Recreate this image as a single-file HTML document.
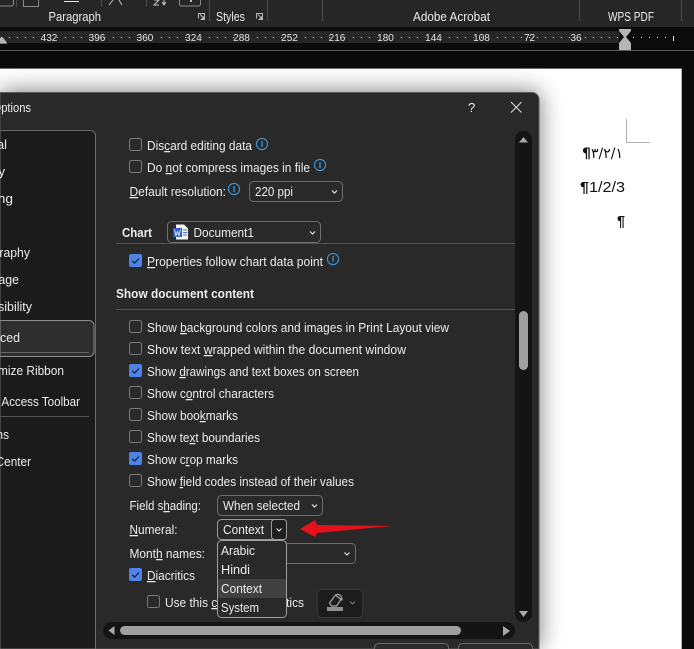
<!DOCTYPE html>
<html><head><meta charset="utf-8"><style>
html,body{margin:0;padding:0;background:#0a0a0a;width:694px;height:649px;overflow:hidden}
svg{display:block}
text{font-family:"Liberation Sans",sans-serif;font-size:12.6px;fill:#ececec}
.b{font-weight:bold;fill:#ececec}
.r{font-size:10px;fill:#e6e6e6;stroke:#262626;stroke-width:2px;paint-order:stroke;text-anchor:middle}
.box{fill:#2a2a2a;stroke:#6e6e6e;stroke-width:1}
.chev{fill:none;stroke:#e0e0e0;stroke-width:1.2}
.chk{fill:none;stroke:#10203c;stroke-width:1.2}
.info{fill:none;stroke:#3f97dc;stroke-width:1.1}
.infl{fill:none;stroke:#3f97dc;stroke-width:1.3}
</style></head><body>
<svg width="694" height="649" viewBox="0 0 694 649" xmlns="http://www.w3.org/2000/svg">
<defs>
<filter id="sh" x="-20%" y="-20%" width="140%" height="140%"><feGaussianBlur stdDeviation="12"/></filter>
<clipPath id="pg"><rect x="0" y="69" width="682" height="580"/></clipPath>
<g id="cb"><rect x=".5" y=".5" width="12" height="12" rx="2" fill="#2a2a2a" stroke="#7a7a7a"/></g>
<g id="cc"><rect width="13" height="13" rx="2" fill="#5083e6"/><path d="M3.3 6.800l2.300 2.300 4.400-4.600" class="chk"/></g>
<g id="i"><circle cx="0" cy="0" r="5.600" class="info"/><path d="M0 -3v6" class="infl"/></g>
</defs>

<!-- ribbon -->
<rect width="694" height="27" fill="#262626"/>
<rect y="27" width="694" height="23" fill="#0b0b0b"/>
<rect y="31" width="619" height="12" fill="#262626"/>
<rect y="50" width="694" height="1" fill="#5c5c5c"/>
<rect y="51" width="694" height="17" fill="#0a0a0a"/>
<g fill="none" stroke="#8a8a8a">
<path d="M13.500 0v4a2 2 0 0 1-2 2H0"/>
<path d="M23.500 0v6.500h15V0"/>
<path d="M179.500 0v4a2 2 0 0 0 2 2h17a2 2 0 0 0 2-2V0"/>
</g>
<rect x="64" y="1" width="15" height="1" fill="#e8e8e8"/>
<path d="M109 5l4-5M122 5l-3-5" stroke="#bdbdbd" fill="none"/>
<path d="M154 0h5l-5 5h5M164 0v5M162 2l2 3 2-3" stroke="#c8c8c8" fill="none"/>
<rect x="190" y="0" width="2" height="2" fill="#bbb"/>
<g fill="#4c4c4c">
<rect x="16" y="0" width="1" height="7"/><rect x="101" y="0" width="1" height="7"/><rect x="146" y="0" width="1" height="7"/>
<rect x="209" y="0" width="1" height="21"/><rect x="267" y="0" width="1" height="21"/><rect x="322" y="0" width="1" height="21"/>
<rect x="579" y="0" width="1" height="21"/><rect x="681" y="0" width="1" height="21"/>
</g>
<text x="48.500" y="21" textLength="52.500" lengthAdjust="spacingAndGlyphs">Paragraph</text>
<text x="216" y="21" textLength="29" lengthAdjust="spacingAndGlyphs">Styles</text>
<text x="413" y="21" textLength="77" lengthAdjust="spacingAndGlyphs">Adobe Acrobat</text>
<text x="608" y="21" textLength="46" lengthAdjust="spacingAndGlyphs">WPS PDF</text>
<g fill="none" stroke="#b8b8b8"><path d="M198.500 18.500v-5h6v6h-4M200 14.500l4 4M204 16v2.500h-2.500"/><path d="M256.500 18.500v-5h6v6h-4M258 14.500l4 4M262 16v2.500h-2.500"/></g>

<!-- ruler -->
<path d="M1 37.500H619" stroke="#e8e8e8" stroke-width="1" stroke-dasharray="1 7"/>
<path d="M633 37.500H668" stroke="#e8e8e8" stroke-width="1" stroke-dasharray="1 7"/>
<rect x="673" y="36" width="1" height="5" fill="#e8e8e8"/>
<text class="r" x="49" y="41">432</text><text class="r" x="97" y="41">396</text><text class="r" x="145" y="41">360</text><text class="r" x="193.500" y="41">324</text><text class="r" x="241.500" y="41">288</text><text class="r" x="289.500" y="41">252</text><text class="r" x="337" y="41">216</text><text class="r" x="385.500" y="41">180</text><text class="r" x="433.500" y="41">144</text><text class="r" x="481.500" y="41">108</text><text class="r" x="529.500" y="41">72</text><text class="r" x="576" y="41">36</text>
<path d="M0 43V38L3 37.500 7 43z" fill="#b5b5b5"/>
<rect x="0" y="43" width="7" height="1" fill="#777"/>
<path d="M619 29h12v2l-5 6 5 6v1h-12v-1l5-6-5-6z" fill="#b5b5b5"/>
<rect x="619" y="44" width="12" height="6" fill="#b5b5b5"/>

<!-- page -->
<rect x="0" y="68" width="682" height="581" fill="#6a6a6a"/>
<rect x="0" y="69" width="681.500" height="580" fill="#fff"/>
<g clip-path="url(#pg)"><rect x="0" y="92" width="539" height="557" fill="#000" opacity=".55" filter="url(#sh)"/></g>
<path d="M626.500 119v23.500H650" fill="none" stroke="#b0b0b0"/>
<text x="582" y="158" textLength="41" lengthAdjust="spacingAndGlyphs" style="fill:#111;font-size:14px;font-family:'DejaVu Sans',sans-serif"><tspan font-weight="bold">¶</tspan>٣/٢/١</text>
<text x="580" y="192" textLength="45" lengthAdjust="spacingAndGlyphs" style="fill:#111;font-size:15px"><tspan font-weight="bold">¶</tspan>1/2/3</text>
<text x="617" y="226" textLength="8" lengthAdjust="spacingAndGlyphs" style="fill:#111;font-size:15px;font-weight:bold">¶</text>

<!-- dialog -->
<path d="M0 92.500H532a7 7 0 0 1 7 7V649H0z" fill="#292929" stroke="#5a5a5a"/>
<text x="-37" y="112" textLength="68" lengthAdjust="spacingAndGlyphs">Word Options</text>
<text x="468" y="112" style="font-size:13px">?</text>
<path d="M511 102l10.500 10.500M521.500 102L511 112.500" stroke="#e0e0e0" fill="none"/>

<!-- sidebar -->
<path d="M0 130.500H90.500a5 5 0 0 1 5 5V649H0z" fill="#1b1b1b" stroke="#6a6a6a"/>
<text x="-38" y="149" textLength="45" lengthAdjust="spacingAndGlyphs">General</text>
<text x="-38" y="176" textLength="43" lengthAdjust="spacingAndGlyphs">Display</text>
<text x="-38" y="203" textLength="51" lengthAdjust="spacingAndGlyphs">Proofing</text>
<text x="-34" y="257" textLength="64" lengthAdjust="spacingAndGlyphs">Typography</text>
<text x="-36" y="284" textLength="55" lengthAdjust="spacingAndGlyphs">Language</text>
<text x="-36" y="311" textLength="68" lengthAdjust="spacingAndGlyphs">Accessibility</text>
<path d="M0 320.500H89a5 5 0 0 1 5 5V351.500a5 5 0 0 1-5 5H0z" fill="#2e2e2e" stroke="#8c8c8c"/>
<rect x="0" y="352" width="89" height="1" fill="#666"/>
<text x="-35" y="342" textLength="55" lengthAdjust="spacingAndGlyphs">Advanced</text>
<text x="-33" y="375" textLength="97" lengthAdjust="spacingAndGlyphs">Customize Ribbon</text>
<text x="-31" y="406" textLength="111" lengthAdjust="spacingAndGlyphs">Quick Access Toolbar</text>
<rect x="0" y="416" width="89" height="1" fill="#555"/>
<text x="-31" y="439" textLength="40" lengthAdjust="spacingAndGlyphs">Add-ins</text>
<text x="-34" y="466" textLength="65" lengthAdjust="spacingAndGlyphs">Trust Center</text>

<!-- content -->
<use href="#cb" x="129" y="138"/>
<text x="147" y="150" textLength="105" lengthAdjust="spacingAndGlyphs">Dis<tspan text-decoration="underline">c</tspan>ard editing data</text>
<use href="#i" x="262" y="144"/>
<use href="#cb" x="129" y="160"/>
<text x="147" y="172" textLength="163" lengthAdjust="spacingAndGlyphs">Do <tspan text-decoration="underline">n</tspan>ot compress images in file</text>
<use href="#i" x="320" y="165"/>
<text x="129.500" y="196" textLength="96.500" lengthAdjust="spacingAndGlyphs"><tspan text-decoration="underline">D</tspan>efault resolution:</text>
<use href="#i" x="234" y="189"/>
<rect class="box" x="249.500" y="181.500" width="93" height="20" rx="4"/>
<text x="255" y="196" textLength="38" lengthAdjust="spacingAndGlyphs">220 ppi</text>
<path class="chev" d="M332 190.500l2.500 2.500 2.500-2.500"/>

<text class="b" x="122" y="237" textLength="30" lengthAdjust="spacingAndGlyphs">Chart</text>
<rect class="box" x="167.500" y="221.500" width="153" height="21" rx="4"/>
<path d="M176 224.500h8l4 4v11h-12z" fill="#f4f4f4"/>
<rect x="173" y="228" width="9" height="9" fill="#2b5fc0"/>
<path d="M174.500 229.500l1.500 6 1.500-4 1.500 4 1.500-6" fill="none" stroke="#fff" stroke-width=".8"/>
<path d="M183 230h4M183 232.500h4M183 235h4" stroke="#3c6fc8" fill="none"/>
<text x="193.500" y="237" textLength="60.500" lengthAdjust="spacingAndGlyphs">Document1</text>
<path class="chev" d="M310 231.500l2.500 2.500 2.500-2.500"/>
<rect x="116" y="243" width="399" height="1" fill="#555"/>

<use href="#cc" x="129" y="254"/>
<text x="147" y="266" textLength="176" lengthAdjust="spacingAndGlyphs"><tspan text-decoration="underline">P</tspan>roperties follow chart data point</text>
<use href="#i" x="333" y="259"/>

<text class="b" x="116" y="298" textLength="138" lengthAdjust="spacingAndGlyphs">Show document content</text>
<rect x="116" y="309" width="399" height="1" fill="#555"/>

<use href="#cb" x="129" y="320"/>
<text x="147" y="332" textLength="302" lengthAdjust="spacingAndGlyphs">Show <tspan text-decoration="underline">b</tspan>ackground colors and images in Print Layout view</text>
<use href="#cb" x="129" y="342"/>
<text x="147" y="354" textLength="259" lengthAdjust="spacingAndGlyphs">Show text <tspan text-decoration="underline">w</tspan>rapped within the document window</text>
<use href="#cc" x="129" y="364"/>
<text x="147" y="376" textLength="212" lengthAdjust="spacingAndGlyphs">Show <tspan text-decoration="underline">d</tspan>rawings and text boxes on screen</text>
<use href="#cb" x="129" y="386"/>
<text x="147" y="398" textLength="127" lengthAdjust="spacingAndGlyphs">Show c<tspan text-decoration="underline">o</tspan>ntrol characters</text>
<use href="#cb" x="129" y="408"/>
<text x="147" y="420" textLength="91" lengthAdjust="spacingAndGlyphs">Show boo<tspan text-decoration="underline">k</tspan>marks</text>
<use href="#cb" x="129" y="430"/>
<text x="147" y="442" textLength="113" lengthAdjust="spacingAndGlyphs">Show te<tspan text-decoration="underline">x</tspan>t boundaries</text>
<use href="#cc" x="129" y="452"/>
<text x="147" y="464" textLength="91" lengthAdjust="spacingAndGlyphs">Show c<tspan text-decoration="underline">r</tspan>op marks</text>
<use href="#cb" x="129" y="474"/>
<text x="147" y="486" textLength="207" lengthAdjust="spacingAndGlyphs">Show <tspan text-decoration="underline">f</tspan>ield codes instead of their values</text>

<text x="129.500" y="510" textLength="71.500" lengthAdjust="spacingAndGlyphs">Field s<tspan text-decoration="underline">h</tspan>ading:</text>
<rect class="box" x="217.500" y="495.500" width="105" height="20" rx="4"/>
<text x="223" y="510" textLength="77" lengthAdjust="spacingAndGlyphs">When selected</text>
<path class="chev" d="M312 504.500l2.500 2.500 2.500-2.500"/>

<text x="129.500" y="534" textLength="48" lengthAdjust="spacingAndGlyphs"><tspan text-decoration="underline">N</tspan>umeral:</text>
<rect class="box" x="217.500" y="519.500" width="69" height="20" rx="4" style="stroke:#9a9a9a"/>
<rect class="box" x="271.500" y="519.500" width="15" height="20" rx="3" style="stroke:#9a9a9a;fill:#1f1f1f"/>
<text x="223" y="534" textLength="41" lengthAdjust="spacingAndGlyphs">Context</text>
<path class="chev" d="M276.500 528.500l2.500 2.500 2.500-2.500"/>
<path d="M300 529L315 520 317 525 392 526 317 533 315 537z" fill="#e5121c"/>

<text x="129.500" y="558" textLength="75.500" lengthAdjust="spacingAndGlyphs">Mont<tspan text-decoration="underline">h</tspan> names:</text>
<rect class="box" x="217.500" y="543.500" width="138" height="20" rx="4"/>
<path class="chev" d="M344.500 552.500l2.500 2.500 2.500-2.500"/>

<use href="#cc" x="129" y="568"/>
<text x="147" y="580" textLength="48" lengthAdjust="spacingAndGlyphs"><tspan text-decoration="underline">D</tspan>iacritics</text>
<use href="#cb" x="147" y="595"/>
<text x="165" y="607" textLength="139" lengthAdjust="spacingAndGlyphs">Use this <tspan text-decoration="underline">c</tspan>olor for diacritics</text>
<rect x="317.500" y="589.500" width="45" height="28" rx="4" fill="#1c1c1c" stroke="#3a3a3a"/>
<path d="M329.500 603l6-8 5.500 4.500-4.500 6.500h-5zM336 595c3-2 6 1 6 5.500" fill="none" stroke="#a8a8a8" stroke-width="1.200"/>
<rect x="327" y="607" width="16" height="4" fill="#8e8e8e"/>
<path d="M350 601.500l2.500 2.500 2.500-2.500" fill="none" stroke="#777" stroke-width="1.100"/>

<!-- dropdown -->
<rect x="217.500" y="540.500" width="69" height="77" rx="4" fill="#292929" stroke="#a0a0a0"/>
<rect x="218" y="579" width="68" height="19" fill="#414141"/>
<text x="221" y="555" textLength="34" lengthAdjust="spacingAndGlyphs">Arabic</text>
<text x="221" y="574" textLength="29" lengthAdjust="spacingAndGlyphs">Hindi</text>
<text x="221" y="593" textLength="41" lengthAdjust="spacingAndGlyphs">Context</text>
<text x="221" y="612" textLength="38" lengthAdjust="spacingAndGlyphs">System</text>

<!-- scrollbars -->
<rect x="515" y="131" width="17" height="491" rx="8.500" fill="#141414"/>
<rect x="519" y="311" width="9" height="59" rx="4.500" fill="#a0a0a0"/>
<path d="M519 142.500l4.500-5.500 4.500 5.500z" fill="#a8a8a8"/>
<path d="M519 611h9l-4.500 6z" fill="#a8a8a8"/>
<rect x="103" y="622" width="412" height="17" rx="8.500" fill="#141414"/>
<rect x="120" y="626" width="341" height="9" rx="4.500" fill="#a0a0a0"/>
<path d="M114.500 626v9l-6-4.500z" fill="#a8a8a8"/>
<path d="M503 626v10l7-5z" fill="#a8a8a8"/>
<path d="M374.500 649v-1.500a4 4 0 0 1 4-4h66a4 4 0 0 1 4 4V649" fill="#2c2c2c" stroke="#6a6a6a"/>
<path d="M458.500 649v-1.500a4 4 0 0 1 4-4h66a4 4 0 0 1 4 4V649" fill="#2c2c2c" stroke="#6a6a6a"/>
</svg>
</body></html>
